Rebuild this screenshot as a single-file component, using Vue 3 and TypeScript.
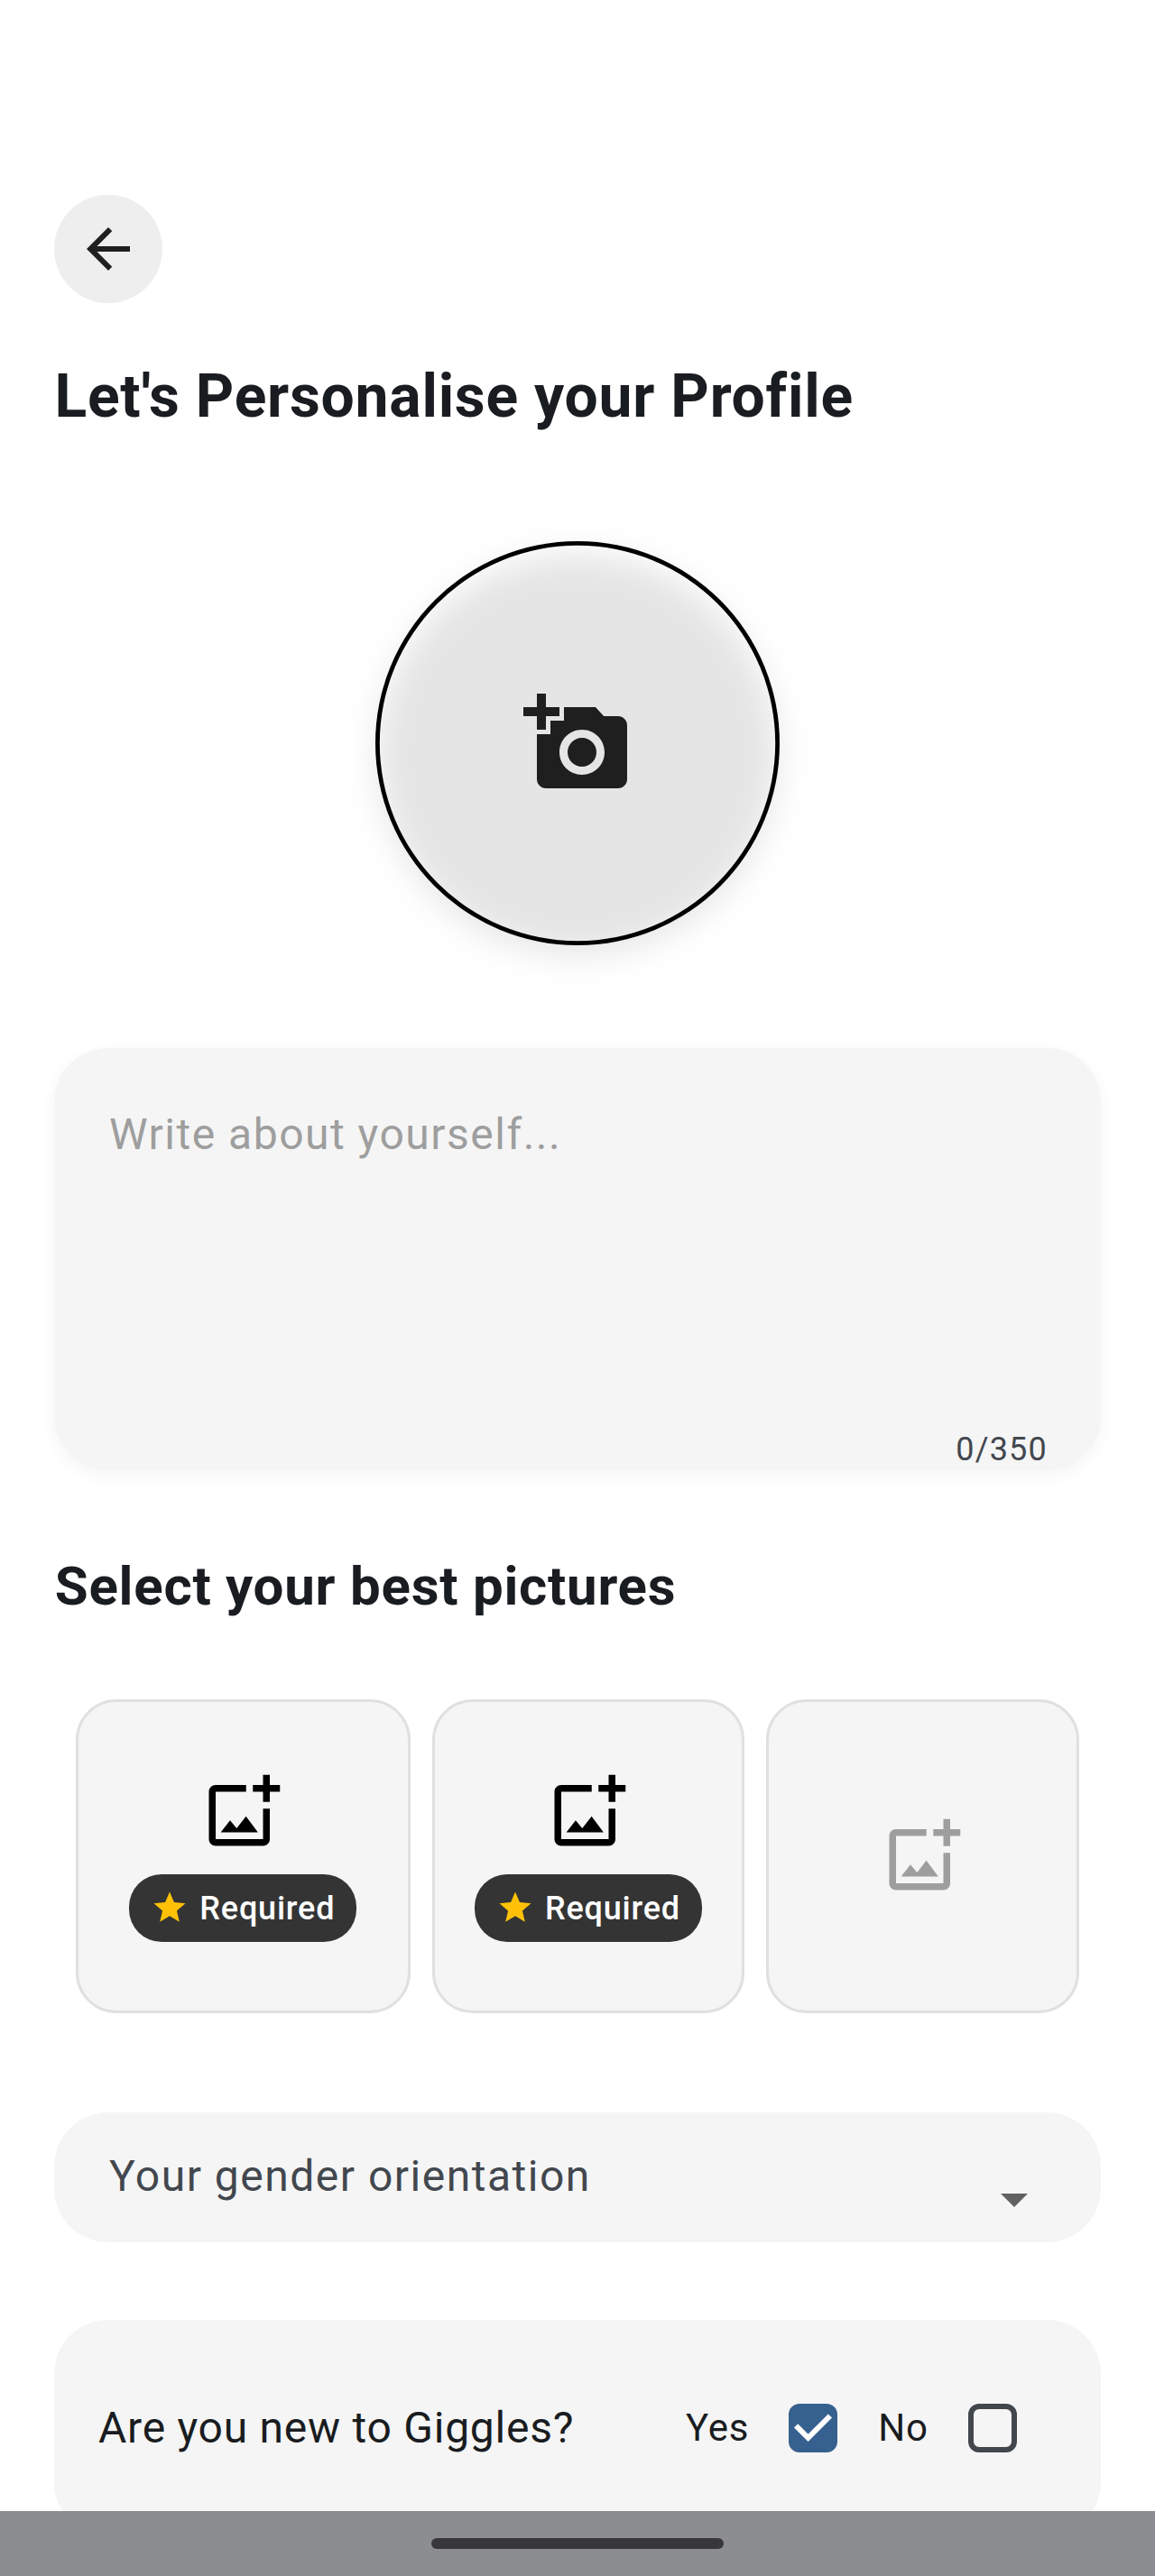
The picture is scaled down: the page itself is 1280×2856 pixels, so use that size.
<script setup lang="ts">
import { ref } from 'vue'

interface PictureSlot {
  id: number
  required: boolean
}

const slots: PictureSlot[] = [
  { id: 1, required: true },
  { id: 2, required: true },
  { id: 3, required: false },
]

const maxLength = 350
const about = ref('')
const isNew = ref(true)
</script>

<template>
  <main class="screen">
    <button class="back" type="button" aria-label="Back">
      <svg width="72" height="72" viewBox="0 0 24 24">
        <path d="M20 11H7.83l5.59-5.59L12 4l-8 8 8 8 1.41-1.41L7.83 13H20v-2z" />
      </svg>
    </button>

    <h1 class="title">Let's Personalise your Profile</h1>

    <div class="avatar">
      <svg width="120" height="120" viewBox="0 0 24 24">
        <path
          fill-rule="evenodd"
          d="M3 4V1h2v3h3v2H5v3H3V6H0V4h3zm3 6V7h3V4h7l1.83 2H21c1.1 0 2 .9 2 2v12c0 1.1-.9 2-2 2H5c-1.1 0-2-.9-2-2V10h3zm7 9c2.76 0 5-2.24 5-5s-2.24-5-5-5-5 2.24-5 5 2.24 5 5 5zm0-1.8a3.2 3.2 0 1 0 0-6.4 3.2 3.2 0 0 0 0 6.4z"
        />
      </svg>
    </div>

    <section class="about">
      <p class="placeholder">Write about yourself...</p>
      <span class="counter">{{ about.length }}/{{ maxLength }}</span>
    </section>

    <h2 class="subtitle">Select your best pictures</h2>

    <section class="pictures">
      <div
        v-for="(slot, i) in slots"
        :key="slot.id"
        class="picture"
        :class="{ first: i === 0, optional: !slot.required }"
      >
        <svg class="add" width="90" height="90" viewBox="0 0 24 24">
          <path
            d="M18 20H4V6h9V4H4c-1.1 0-2 .9-2 2v14c0 1.1.9 2 2 2h14c1.1 0 2-.9 2-2v-9h-2v9zm-7.79-3.17l-1.96-2.36L5.5 18h11l-3.54-4.71-2.75 3.54zM20 4V1h-2v3h-3v2h3v3h2V6h3V4h-3z"
          />
        </svg>
        <div v-if="slot.required" class="badge">
          <svg width="42" height="42" viewBox="0 0 24 24">
            <path
              d="M12 17.27L18.18 21l-1.64-7.03L22 9.24l-7.19-.61L12 2 9.19 8.63 2 9.24l5.46 4.73L5.82 21z"
            />
          </svg>
          <span class="badge-text">Required</span>
        </div>
      </div>
    </section>

    <section class="gender">
      <span class="gender-label">Your gender orientation</span>
      <svg class="caret" width="72" height="72" viewBox="0 0 24 24"><path d="M7 10l5 5 5-5z" /></svg>
    </section>

    <section class="newcomer">
      <span class="question">Are you new to Giggles?</span>
      <span class="option">Yes</span>
      <span class="target" @click="isNew = true">
        <span class="box" :class="{ checked: isNew }">
          <svg v-if="isNew" width="54" height="54" viewBox="0 0 54 54">
            <path d="M8.1 24.3L21.6 37.8L45.9 13.5" />
          </svg>
        </span>
      </span>
      <span class="option">No</span>
      <span class="target" @click="isNew = false">
        <span class="box" :class="{ checked: !isNew }">
          <svg v-if="!isNew" width="54" height="54" viewBox="0 0 54 54">
            <path d="M8.1 24.3L21.6 37.8L45.9 13.5" />
          </svg>
        </span>
      </span>
    </section>

    <div class="system-bar"><div class="handle"></div></div>
  </main>
</template>

<style>
body {
  margin: 0;
  background: #fff;
}
</style>

<style scoped>
.screen {
  position: relative;
  box-sizing: border-box;
  width: 1280px;
  height: 2856px;
  padding: 216px 60px 0;
  overflow: hidden;
  display: flex;
  flex-direction: column;
  background: #fff;
  color: #191c20;
  font-family: Roboto, sans-serif;
}

.screen > * {
  flex-shrink: 0;
}

svg {
  display: block;
  flex-shrink: 0;
}

.back {
  display: flex;
  align-items: center;
  justify-content: center;
  width: 120px;
  height: 120px;
  padding: 0;
  border: 0;
  border-radius: 50%;
  background: #eeeeee;
  fill: #1f1f1f;
}

.title {
  margin: 64px 0 0 0.5px;
  font-size: 66px;
  line-height: 80px;
  font-weight: 700;
  letter-spacing: 0.75px;
  white-space: nowrap;
}

.avatar {
  position: relative;
  z-index: 0;
  display: flex;
  align-items: center;
  justify-content: center;
  align-self: center;
  width: 448px;
  height: 448px;
  margin-top: 120.3px;
  border-radius: 50%;
  fill: #1f1f1f;
}

/* The soft disc shows through the ring, so it is a layer and not a box-shadow. */
.avatar::before {
  content: '';
  position: absolute;
  z-index: -1;
  inset: 14px 2px -10px;
  border-radius: 50%;
  background: rgba(0, 0, 0, 0.1);
  filter: blur(18px);
}

.avatar::after {
  content: '';
  position: absolute;
  inset: 0;
  border-radius: 50%;
  box-shadow: inset 0 0 0 4.8px #000;
}

.about {
  display: flex;
  flex-direction: column;
  justify-content: space-between;
  box-sizing: border-box;
  height: 468px;
  margin-top: 114.2px;
  padding: 60px 59px 0 61px;
  border-radius: 60px;
  background: #f5f5f5;
  box-shadow: 0 6px 20px rgba(0, 0, 0, 0.045);
}

.placeholder {
  margin: 0;
  color: #9e9e9e;
  font-size: 48px;
  line-height: 72px;
  letter-spacing: 1.5px;
}

.counter {
  align-self: flex-end;
  margin-bottom: -1px;
  color: #42474e;
  font-size: 36px;
  line-height: 48px;
  letter-spacing: 1.2px;
}

.subtitle {
  margin: 92.5px 0 0 0.75px;
  font-size: 60px;
  line-height: 72px;
  font-weight: 700;
  letter-spacing: 0.75px;
}

.pictures {
  display: flex;
  gap: 24px;
  height: 348.5px;
  margin: 89px 24px 0;
}

.picture {
  box-sizing: border-box;
  flex: 1 1 0;
  display: flex;
  flex-direction: column;
  align-items: center;
  justify-content: center;
  gap: 24px;
  border: 3px solid #e0e0e0;
  border-radius: 45px;
  background: #f5f5f5;
}

.picture.first {
  flex: 0 0 370.6px;
}

.add {
  fill: #000;
}

.optional .add {
  fill: #9e9e9e;
}

.badge {
  display: flex;
  align-items: center;
  gap: 12px;
  box-sizing: border-box;
  height: 75px;
  padding: 0 24px;
  border-radius: 36px;
  background: #343434;
  color: #fff;
  fill: #ffc107;
}

.badge-text {
  padding-top: 3px;
  font-size: 36px;
  line-height: 51px;
  font-weight: 500;
  letter-spacing: 0.8px;
}

.gender {
  display: flex;
  justify-content: space-between;
  box-sizing: border-box;
  height: 144px;
  margin-top: 109.5px;
  padding: 35px 60px 0 61px;
  border-radius: 60px;
  background: #f5f5f5;
}

.gender-label {
  color: #42474e;
  font-size: 48px;
  line-height: 72px;
  letter-spacing: 1.5px;
}

.caret {
  margin-top: 25px;
  fill: #616161;
}

.newcomer {
  display: flex;
  align-items: center;
  box-sizing: border-box;
  height: 240px;
  margin-top: 86px;
  padding: 0 48px 0 49px;
  border-radius: 60px;
  background: #f5f5f5;
}

.question {
  flex: 1;
  font-size: 48px;
  line-height: 72px;
  letter-spacing: 0.75px;
}

.option {
  margin-right: -0.75px;
  padding-top: 1px;
  font-size: 42px;
  line-height: 60px;
  letter-spacing: 0.75px;
}

.target {
  display: flex;
  align-items: center;
  justify-content: center;
  width: 144px;
  height: 144px;
}

.box {
  box-sizing: border-box;
  width: 54px;
  height: 54px;
  border: 6px solid #42474e;
  border-radius: 12px;
}

.box.checked {
  border: 0;
  background: #36618e;
}

.box path {
  fill: none;
  stroke: #fff;
  stroke-width: 6;
}

.system-bar {
  position: absolute;
  left: 0;
  right: 0;
  bottom: 0;
  display: flex;
  align-items: center;
  justify-content: center;
  height: 72px;
  background: #8c8d91;
}

.handle {
  width: 324px;
  height: 12px;
  border-radius: 6px;
  background: #38383a;
}
</style>
